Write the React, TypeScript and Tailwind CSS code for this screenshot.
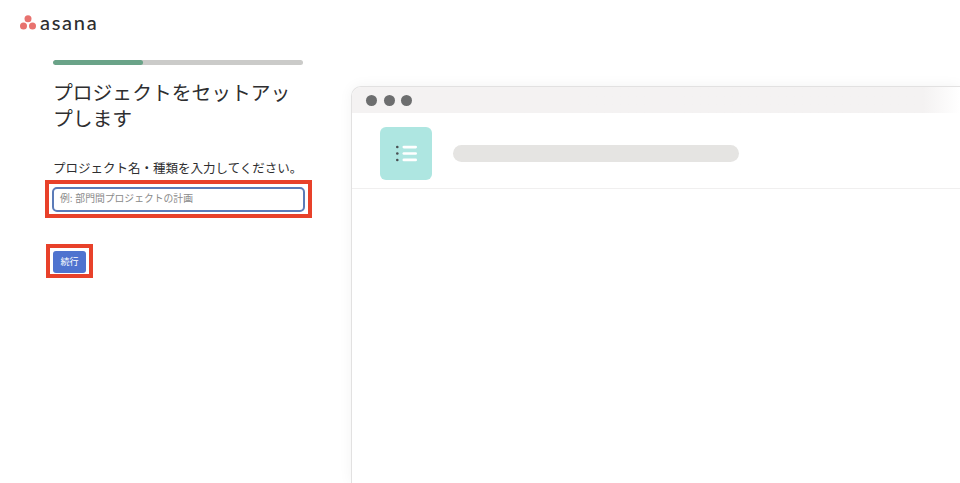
const jpFont = "font-['Inter','Noto_Sans_CJK_JP',sans-serif]"

function AsanaLogo() {
  return (
    <div className="flex h-[16px] items-center gap-[4px]">
      <svg width="16" height="16" viewBox="0 0 16 16" className="shrink-0">
        <circle cx="8" cy="3.8" r="3.5" fill="#e8726f" />
        <circle cx="3.5" cy="11" r="3.5" fill="#e8726f" />
        <circle cx="12.5" cy="11" r="3.5" fill="#e8726f" />
      </svg>
      <span className="-mt-[2px] font-['Lato',sans-serif] text-[20px] font-medium leading-none tracking-[1.7px] text-[#2e2e30]">asana</span>
    </div>
  )
}

function SetupForm() {
  return (
    <div className="flex w-[351px] shrink-0 flex-col pl-[45px]">
      <div className="ml-[8px] flex h-[5px] w-[250px] overflow-hidden rounded-full bg-[#cbcbc9]">
        <div className="h-full w-[90px] rounded-full bg-[#6aa388]" />
      </div>
      <h1 className={`${jpFont} ml-[8px] mt-[15px] w-[250px] text-[19.8px] font-normal leading-[26px] text-[#2e2e30]`}>
        プロジェクトをセットアップします
      </h1>
      <p className={`${jpFont} ml-[8px] mt-[28px] whitespace-nowrap text-[12.5px] leading-[18px] text-[#2e2e30]`}>
        プロジェクト名・種類を入力してください。
      </p>
      <div className="mt-[2px] flex h-[38px] w-[267px] items-center border-[4px] border-[#e8412a] pl-[3px]">
        <div className="flex h-[25px] w-[253px] items-center rounded-[5px] border-2 border-[#5b7bb8] bg-white pl-[6px]">
          <span className={`${jpFont} text-[9.8px] text-[#8a8a8a]`}>例: 部門間プロジェクトの計画</span>
        </div>
      </div>
      <div className="ml-px mt-[26px] flex h-[34px] w-[47px] items-center border-[4px] border-[#e8412a] pl-[3px]">
        <button className={`${jpFont} mt-[1px] flex h-[22px] w-[33px] items-center justify-center rounded-[3px] bg-[#4f73cf] text-[9px] text-white`}>
          続行
        </button>
      </div>
    </div>
  )
}

function ProjectPreview() {
  return (
    <div className="mt-[26px] h-[397px] min-w-0 flex-1 overflow-hidden rounded-tl-[10px] border-l border-t border-[#e2e1e1] bg-white shadow-[0_0_14px_rgba(0,0,0,0.05)]">
      <div className="flex h-[26px] items-center gap-[6.5px] bg-gradient-to-r from-[#f4f2f2] from-[94%] to-white pl-[14px]">
        <span className="h-[11px] w-[11px] rounded-full bg-[#6d6e6f]" />
        <span className="h-[11px] w-[11px] rounded-full bg-[#6d6e6f]" />
        <span className="h-[11px] w-[11px] rounded-full bg-[#6d6e6f]" />
      </div>
      <div className="flex h-[76px] items-start border-b border-[#f0efef] pl-[28px] pt-[14px]">
        <div className="flex h-[53px] w-[52px] items-center justify-center rounded-[6px] bg-[#aee6e1]">
          <svg width="21" height="17" viewBox="0 0 21 17">
            <circle cx="1.3" cy="2" r="1.3" fill="#4a4f52" />
            <circle cx="1.3" cy="8.5" r="1.3" fill="#4a4f52" />
            <circle cx="1.3" cy="15" r="1.3" fill="#4a4f52" />
            <rect x="6.5" y="0.8" width="14.5" height="2.6" rx="1.3" fill="#fff" />
            <rect x="6.5" y="7.2" width="14.5" height="2.6" rx="1.3" fill="#fff" />
            <rect x="6.5" y="13.6" width="14.5" height="2.6" rx="1.3" fill="#fff" />
          </svg>
        </div>
        <div className="ml-[21px] mt-[18px] h-[17px] w-[286px] rounded-full bg-[#e5e4e2]" />
      </div>
    </div>
  )
}

export default function App() {
  return (
    <div className="h-[483px] w-[960px] overflow-hidden bg-white">
      <div className="flex h-[60px] items-start pl-[20px] pt-[15px]">
        <AsanaLogo />
      </div>
      <div className="flex items-start">
        <SetupForm />
        <ProjectPreview />
      </div>
    </div>
  )
}
